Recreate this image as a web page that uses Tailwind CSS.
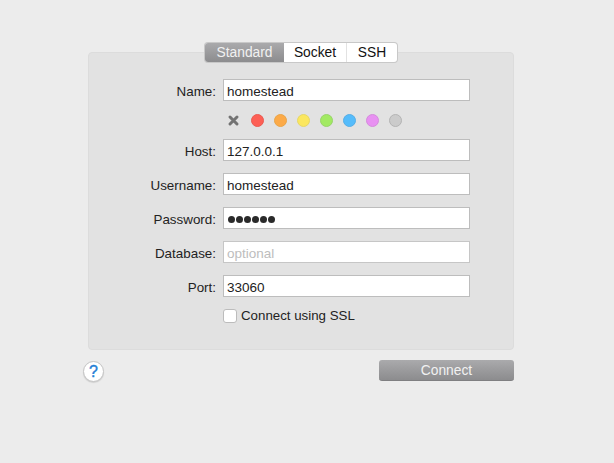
<!DOCTYPE html>
<html lang="en">
  <head>
    <meta charset="UTF-8" />
    <title>Connect</title>
    <script src="https://cdn.jsdelivr.net/npm/@tailwindcss/browser@4"></script>
  </head>
  <body class="w-[614px] h-[463px] overflow-hidden bg-[#ececec] font-['Liberation_Sans',sans-serif] text-[13.4px] text-[#222]">
    <div class="pt-[52px] pl-[88px] w-[514px]">
      <!-- Panel -->
      <div class="relative w-[426px] h-[298px] bg-[#e2e2e2] border border-[#dcdcdc] rounded-[4px] pt-[26px]">
        <!-- Tabs -->
        <div class="absolute top-[-10px] left-[116px] flex h-[19px] w-[192px] rounded-[3px] overflow-hidden bg-white shadow-[0_0_0_1px_#c8c8c8] text-[13.8px] leading-[19px] text-center text-[#111]">
          <div class="w-[79px] bg-gradient-to-b from-[#aaaaac] to-[#8c8c8e] text-[#f1f1f1]">Standard</div>
          <div class="w-[63px] border-r border-[#e2e2e2]">Socket</div>
          <div class="w-[50px]">SSH</div>
        </div>

        <div class="flex items-center h-[22px]">
          <label class="w-[127px] text-right pt-[5px]">Name:</label>
          <input class="ml-[7px] w-[247px] h-[22px] bg-white border border-[#bdbdbd] px-[3px] pt-[2px] text-[13.5px] leading-[18px] text-[#222]" value="homestead" />
        </div>

        <!-- Colour picker -->
        <div class="flex items-center h-[38px] pl-[138px] gap-[10px]">
          <svg class="w-[13px] h-[13px] mr-[1px]" viewBox="0 0 13 13"><path d="M3 3l7 7M10 3l-7 7" stroke="#737373" stroke-width="3" stroke-linecap="round" /></svg>
          <span class="w-[13px] h-[13px] rounded-full bg-[#fd5f55] border border-[#ea5a50]"></span>
          <span class="w-[13px] h-[13px] rounded-full bg-[#fcaa48] border border-[#e9a548]"></span>
          <span class="w-[13px] h-[13px] rounded-full bg-[#fbe75f] border border-[#e6d768]"></span>
          <span class="w-[13px] h-[13px] rounded-full bg-[#a2ea62] border border-[#98d46a]"></span>
          <span class="w-[13px] h-[13px] rounded-full bg-[#55bcfb] border border-[#56aee6]"></span>
          <span class="w-[13px] h-[13px] rounded-full bg-[#e891f2] border border-[#d48bdc]"></span>
          <span class="w-[13px] h-[13px] rounded-full bg-[#cbcbcb] border border-[#b4b4b4]"></span>
        </div>

        <div class="flex flex-col gap-[12px]">
          <div class="flex items-center h-[22px]">
            <label class="w-[127px] text-right pt-[5px]">Host:</label>
            <input class="ml-[7px] w-[247px] h-[22px] bg-white border border-[#bdbdbd] px-[3px] pt-[2px] text-[13.5px] leading-[18px] text-[#222]" value="127.0.0.1" />
          </div>
          <div class="flex items-center h-[22px]">
            <label class="w-[127px] text-right pt-[5px]">Username:</label>
            <input class="ml-[7px] w-[247px] h-[22px] bg-white border border-[#bdbdbd] px-[3px] pt-[2px] text-[13.5px] leading-[18px] text-[#222]" value="homestead" />
          </div>
          <div class="flex items-center h-[22px]">
            <label class="w-[127px] text-right pt-[5px]">Password:</label>
            <div class="ml-[7px] w-[247px] h-[22px] bg-white border border-[#bdbdbd] pl-[4px] pt-[2px] flex items-center gap-[1px]">
              <span class="w-[7px] h-[7px] rounded-full bg-[#2a2a2a]"></span>
              <span class="w-[7px] h-[7px] rounded-full bg-[#2a2a2a]"></span>
              <span class="w-[7px] h-[7px] rounded-full bg-[#2a2a2a]"></span>
              <span class="w-[7px] h-[7px] rounded-full bg-[#2a2a2a]"></span>
              <span class="w-[7px] h-[7px] rounded-full bg-[#2a2a2a]"></span>
              <span class="w-[7px] h-[7px] rounded-full bg-[#2a2a2a]"></span>
            </div>
          </div>
          <div class="flex items-center h-[22px]">
            <label class="w-[127px] text-right pt-[5px]">Database:</label>
            <input class="ml-[7px] w-[247px] h-[22px] bg-white border border-[#c6c6c6] px-[3px] pt-[2px] text-[13.5px] leading-[18px] placeholder:text-[#bdbdbd]" placeholder="optional" />
          </div>
          <div class="flex items-center h-[22px]">
            <label class="w-[127px] text-right pt-[5px]">Port:</label>
            <input class="ml-[7px] w-[247px] h-[22px] bg-white border border-[#bdbdbd] px-[3px] pt-[2px] text-[13.5px] leading-[18px] text-[#222]" value="33060" />
          </div>
        </div>

        <div class="flex items-center mt-[12px] ml-[134px] h-[14px]">
          <span class="w-[14px] h-[14px] bg-white border border-[#bcbcbc] rounded-[3px]"></span>
          <span class="ml-[4px] text-[13.3px]">Connect using SSL</span>
        </div>
      </div>
    </div>

    <!-- Footer -->
    <div class="flex justify-between items-start w-[431px] ml-[83px] mt-[10px]">
      <div class="mt-[1px] w-[21px] h-[21px] rounded-full bg-white border border-[#c4c4c4] shadow-[0_1px_1px_#d0d0d0] text-[#1f7fd6] text-[16px] leading-[19px] text-center [-webkit-text-stroke:0.4px_#1f7fd6]">?</div>
      <button class="w-[135px] h-[21px] rounded-[3px] border-b border-[#7f7f81] bg-gradient-to-b from-[#aaaaac] to-[#8c8c8e] text-[#f1f1f1] text-[13.8px] leading-[19px] text-center">Connect</button>
    </div>
  </body>
</html>
